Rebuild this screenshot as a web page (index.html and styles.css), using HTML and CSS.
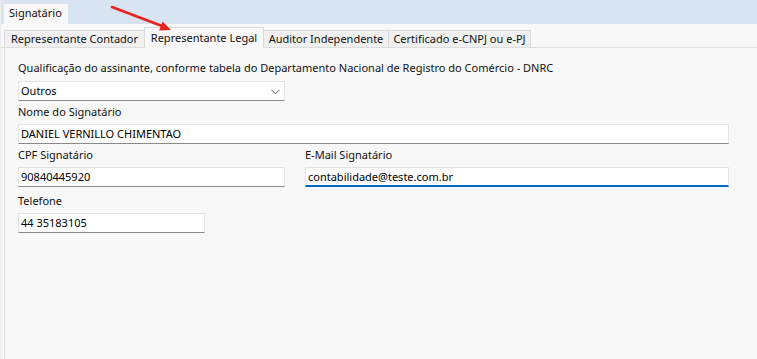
FILE: index.html
```html
<!DOCTYPE html>
<html lang="pt-BR">
<head>
<meta charset="utf-8">
<title>Signatário</title>
<link rel="stylesheet" href="styles.css">
</head>
<body>
<div class="window">
  <div class="topbar">
    <div class="toptab">Signatário</div>
  </div>
  <div class="tabs">
    <div class="tab tab-contador">Representante Contador</div>
    <div class="tab tab-legal active">Representante Legal</div>
    <div class="tab tab-auditor">Auditor Independente</div>
    <div class="tab tab-cert">Certificado e-CNPJ ou e-PJ</div>
  </div>
  <div class="panel">
    <div class="lbl lbl-first">Qualificação do assinante, conforme tabela do Departamento Nacional de Registro do Comércio - DNRC</div>
    <div class="field select w-small">
      <span>Outros</span>
      <svg class="chev" width="9" height="6" viewBox="0 0 9 6"><path d="M0.5 0.8 L4.5 4.8 L8.5 0.8" fill="none" stroke="#555" stroke-width="1"/></svg>
    </div>
    <div class="lbl">Nome do Signatário</div>
    <div class="field w-wide">DANIEL VERNILLO CHIMENTAO</div>
    <div class="two-col">
      <div class="col">
        <div class="lbl">CPF Signatário</div>
        <div class="field">90840445920</div>
      </div>
      <div class="col">
        <div class="lbl">E-Mail Signatário</div>
        <div class="field focused">contabilidade@teste.com.br</div>
      </div>
    </div>
    <div class="lbl lbl-tel">Telefone</div>
    <div class="field w-tel">44 35183105</div>
  </div>
</div>
<svg class="arrow" width="200" height="50" viewBox="0 0 200 50">
  <line x1="112" y1="7" x2="162" y2="26" stroke="#e8231f" stroke-width="2.6" stroke-linecap="round"/>
  <polygon points="171,30 159.1,30.4 162.6,21.6" fill="#e8231f"/>
</svg>
</body>
</html>
```

FILE: styles.css
```css
* { box-sizing: border-box; }

html, body {
  margin: 0;
  padding: 0;
}

body {
  width: 757px;
  height: 359px;
  overflow: hidden;
  background: #f8f8f8;
  font-family: "Noto Sans", "Open Sans", sans-serif;
  font-size: 11px;
  color: #111;
  position: relative;
}

.window {
  display: flex;
  flex-direction: column;
  height: 359px;
  border-left: 1px solid #ececec;
}

.topbar {
  height: 24px;
  background: #d8e4f1;
  display: flex;
  align-items: flex-end;
  padding-left: 3px;
}

.toptab {
  width: 64px;
  height: 20px;
  background: #f8f8f8;
  padding-left: 5px;
  line-height: 18px;
}

.tabs {
  height: 24px;
  display: flex;
  align-items: flex-end;
  padding-left: 3px;
  border-bottom: 1px solid #dedede;
}

.tab {
  height: 17px;
  line-height: 16px;
  text-align: center;
  background: #f0f0f0;
  border: 1px solid #dadada;
  border-bottom: none;
  margin-left: -1px;
  white-space: nowrap;
}

.tab-contador { width: 141px; margin-left: 0; }
.tab-legal { width: 120px; }
.tab-auditor { width: 126px; }
.tab-cert { width: 143px; }

.tab.active {
  height: 21px;
  line-height: 19px;
  background: #f8f8f8;
  margin-bottom: -1px;
  position: relative;
}

.panel {
  flex: 1;
  margin-left: 3px;
  border-left: 1px solid #dadada;
  padding: 12px 0 0 13px;
}

.lbl {
  line-height: 16px;
  height: 16px;
  margin-top: 3px;
  margin-bottom: 4px;
  white-space: nowrap;
}

.lbl-first { margin-top: 0; margin-bottom: 5px; }
.lbl-tel { margin-top: 6px; }

.field {
  height: 20px;
  background: #fff;
  border: 1px solid #e4e4e4;
  border-bottom: 1px solid #8a8a8a;
  padding: 0 2px;
  line-height: 18px;
  color: #000;
  white-space: nowrap;
  overflow: hidden;
}

.w-small { width: 267px; }
.w-wide { width: 711px; }
.w-tel { width: 187px; }

.select {
  display: flex;
  align-items: center;
  justify-content: space-between;
  padding-right: 4px;
}

.chev { display: block; margin-top: 1px; }

.two-col {
  display: grid;
  grid-template-columns: 267px 424px;
  column-gap: 20px;
}

.focused {
  border-bottom: 2px solid #0067c0;
  line-height: 17px;
}

.arrow {
  position: absolute;
  left: 0;
  top: 0;
}
```
